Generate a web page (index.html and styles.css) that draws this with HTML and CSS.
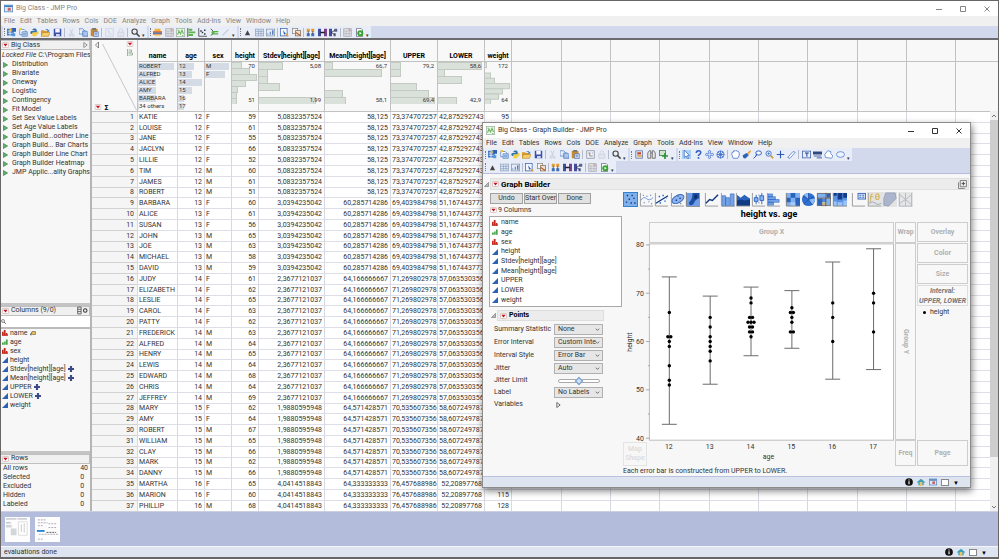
FILE: index.html
```html
<!DOCTYPE html>
<html lang="en">
<head>
<meta charset="utf-8">
<title>Big Class - JMP Pro</title>
<link rel="stylesheet" href="styles.css">
</head>
<body>
<svg class="sprite" aria-hidden="true">
  <symbol id="i-newtable" viewBox="0 0 12 12"><rect x="0" y="1" width="9" height="9" fill="#3f78c4"/><path d="M1 4h7M1 7h7M4 3v7" stroke="#fff"/><rect x="6" y="0" width="6" height="5" fill="#2b5fb8"/><path d="M5 0l1 2 2 .5-2 .8-1 2-1-2-2-.8 2-.5z" fill="#f4c430"/><rect x="7" y="7" width="4" height="4" fill="#4f9be0"/></symbol>
  <symbol id="i-script" viewBox="0 0 12 12"><path d="M1 2h6l2 2v5H1z" fill="#fff" stroke="#4a7ec4"/><path d="M4 5h7v6H4z" fill="#dbe8f8" stroke="#4a7ec4"/><path d="M5 7h5M5 9h5" stroke="#4a7ec4"/><path d="M1 0l3 0 0 3-3 0z" fill="#f4c430"/></symbol>
  <symbol id="i-python" viewBox="0 0 12 12"><path d="M3 3c0-3 6-3 6 0v3H4.500c-1 0-1.500 1-1.500 2H2C0 8 0 4 2 4h4V3z" fill="#3572a8"/><path d="M9 9c0 3-6 3-6 0V7c0-1 1-1 2-1h3c1 0 1.500-1 1.500-2h.5c2 0 2 4 0 4.500H6V9z" fill="#f5cc3a"/></symbol>
  <symbol id="i-folder" viewBox="0 0 12 12"><path d="M0 3h4l1 1h5v7H0z" fill="#d99a2b"/><path d="M2 6h10l-2 5H0z" fill="#f6cf6a" stroke="#a8741a" stroke-width=".6"/><path d="M6 2q3-2 4 1l1-1v3H8l1-1q-1-2-3-1z" fill="#4a82c8"/></symbol>
  <symbol id="i-save" viewBox="0 0 12 12"><path d="M1 1h10v10H1z" fill="#3b4ea8"/><path d="M3 1h6v5H3z" fill="#f4f6ff"/><path d="M4 8h5v3H4z" fill="#cfd6f2"/></symbol>
  <symbol id="i-cut" viewBox="0 0 12 12"><path d="M4 1l3 7M8 1L5 8" stroke="#c3c8d6" fill="none"/><circle cx="4" cy="9.500" r="1.500" fill="none" stroke="#c3c8d6"/><circle cx="8" cy="9.500" r="1.500" fill="none" stroke="#c3c8d6"/></symbol>
  <symbol id="i-copy" viewBox="0 0 12 12"><path d="M0 1h5l2 2v5H0z" fill="#e6effb" stroke="#5c82c0"/><path d="M5 4h5l2 2v5H5z" fill="#a9c5ee" stroke="#446fb5"/></symbol>
  <symbol id="i-paste" viewBox="0 0 12 12"><rect x="1" y="1" width="9" height="10" rx="1" fill="#c98a2c"/><rect x="3" y="0" width="5" height="2.500" fill="#777"/><path d="M5 5h6v6.500H5z" fill="#dfe9fa" stroke="#4d73b5"/><path d="M6.500 7h3M6.500 9h3" stroke="#4d73b5"/></symbol>
  <symbol id="i-prefs" viewBox="0 0 12 12"><rect x="1" y="1" width="10" height="10" fill="#eef0f5" stroke="#8a8f9c"/><path d="M3 4h3M5 4v4M5 8h4M8 4h1" stroke="#777"/></symbol>
  <symbol id="i-prefsoff" viewBox="0 0 12 12"><rect x="1" y="1" width="10" height="10" fill="none" stroke="#ccd0dc"/><path d="M3 4h3M5 4v4M5 8h4" stroke="#ccd0dc"/></symbol>
  <symbol id="i-lock" viewBox="0 0 12 12"><path d="M4 6V4q0-3 2.500-3T9 4v2" fill="none" stroke="#ccd0dc"/><rect x="2.500" y="5.500" width="8" height="5.500" fill="#e2e4ec" stroke="#ccd0dc"/></symbol>
  <symbol id="i-search" viewBox="0 0 12 12"><circle cx="4.800" cy="4.800" r="3.500" fill="none" stroke="#444" stroke-width="1.500"/><path d="M7.500 7.500l4 4" stroke="#444" stroke-width="2"/></symbol>
  <symbol id="i-print" viewBox="0 0 12 12"><path d="M2 1h8v4H2z" fill="#f3b13c"/><path d="M0 4h12v5H0z" fill="#e07b39"/><path d="M0 6h12v2H0z" fill="#5a7ab8"/><path d="M2 9h8v2H2z" fill="#f5d27a"/></symbol>
  <symbol id="i-graysheet" viewBox="0 0 12 12"><rect x="1" y="1" width="10" height="10" fill="#e5e5e8" stroke="#a2a5ad"/><path d="M1 4h10M4 4v7M8 4v7M1 7.500h10" stroke="#b0b3bb"/><path d="M7 0l4 3-3 1z" fill="#c99"/></symbol>
  <symbol id="i-gb" viewBox="0 0 12 12"><rect x=".5" y=".5" width="11" height="11" fill="#eef7ea" stroke="#9ab5a0"/><path d="M2 9l2-5 2 4 2-5 2 5" fill="none" stroke="#6fb562" stroke-width="1.400"/><path d="M2 3h2M8 10h2" stroke="#6fb562"/></symbol>
  <symbol id="i-dist" viewBox="0 0 12 12"><path d="M1 0v12" stroke="#333"/><path d="M2 1h5v2.500H2zM2 4.500h9V7H2zM2 8h6v2.500H2z" fill="#5cb547"/></symbol>
  <symbol id="i-fit" viewBox="0 0 12 12"><path d="M1 0v11h11" stroke="#333" fill="none"/><path d="M3 3h2v2H3zM5 5h2v2H5zM8 7h2v2H8zM8 2h2v2H8z" fill="#334"/></symbol>
  <symbol id="i-model" viewBox="0 0 12 12"><path d="M1 1l3 3M1 10l4-3" stroke="#333"/><path d="M3 4h8v1.500H3zM3 7h8v1.500H3z" fill="#4cb33c"/><circle cx="4" cy="6" r="2" fill="#5cb547"/></symbol>
  <symbol id="i-line" viewBox="0 0 12 12"><path d="M2 10l8-8" stroke="#c8ccd8" stroke-width="1.500"/></symbol>
  <symbol id="i-up" viewBox="0 0 12 12"><path d="M6 3l3.500 6.500h-7z" fill="#444"/></symbol>
  <symbol id="i-sheet" viewBox="0 0 12 12"><rect x=".5" y="1.500" width="11" height="9" fill="#e2ebf7" stroke="#8fa3c0"/><path d="M1 4.500h10M1 7.500h10M4.500 2v8M8 2v8" stroke="#8fa3c0"/></symbol>
  <symbol id="i-chartsheet" viewBox="0 0 12 12"><rect x=".5" y="1.500" width="11" height="9" fill="#e6edf8" stroke="#8394b0"/><path d="M2 9h1V7H2zM5 9h1.500V5H5zM8 9h2V3H8z" fill="#5a7fb8"/></symbol>
  <symbol id="i-select" viewBox="0 0 12 12"><rect x=".5" y=".5" width="9" height="10" fill="#f4f7fd" stroke="#3a66b0"/><path d="M4 3l4 5H6v3z" fill="#2c5db5"/><path d="M8 8l3 3" stroke="#e5a020" stroke-width="2"/></symbol>
  <symbol id="i-copies" viewBox="0 0 12 12"><rect x=".5" y=".5" width="7" height="7" fill="#f4f4f4" stroke="#888"/><rect x="4.500" y="3.500" width="7" height="7" fill="#e9e3d8" stroke="#8a6a48"/><path d="M5 6l6 4" stroke="#b5622c" stroke-width="1.500"/></symbol>
  <symbol id="i-stack" viewBox="0 0 12 12"><path d="M1 1h4v4H1zM7 1h4v4H7z" fill="#e59a2c"/><path d="M1 7h4v4H1zM7 7h4v4H7z" fill="#3f6fb8"/><path d="M3 4v4M9 4v4" stroke="#444"/></symbol>
  <symbol id="i-join" viewBox="0 0 12 12"><path d="M0 1h4v10H0z" fill="#3f4f9e"/><path d="M8 1h4v10H8z" fill="#7a3f8e"/><path d="M3 6h6" stroke="#222" stroke-width="2"/></symbol>
  <symbol id="i-split" viewBox="0 0 12 12"><path d="M0 1h4v10H0z" fill="#3f4f9e"/><path d="M7 1h4v4H7zM6 7h3v4H6z" fill="#5a5f8e"/><path d="M3 6l5-3M3 6l5 3" stroke="#333"/></symbol>
  <symbol id="i-run" viewBox="0 0 12 12"><path d="M2 .5h6l2 2v9H2z" fill="#fff" stroke="#667"/><circle cx="7" cy="7" r="4" fill="#35a32f"/><path d="M6 5l3 2-3 2z" fill="#fff"/></symbol>
  <symbol id="i-journal" viewBox="0 0 12 12"><path d="M1 1h9v10H1z" fill="#dde4f2" stroke="#5c72a0"/><path d="M3 3h5v3H3z" fill="#c54b36"/><path d="M3 8h6" stroke="#e0a030" stroke-width="2"/></symbol>
  <symbol id="i-binoc" viewBox="0 0 12 12"><path d="M1 11V4l2-3h2v10zM7 11V1h2l2 3v7z" fill="#e7e7ea" stroke="#555"/><path d="M5 4h2" stroke="#555"/></symbol>
  <symbol id="i-addg" viewBox="0 0 12 12"><rect x=".5" y=".5" width="8" height="7" fill="#cfe6cc" stroke="#3c7a4a"/><path d="M8 4v8M4 8h8" stroke="#2f8f35" stroke-width="2.200"/></symbol>
  <symbol id="i-arrow" viewBox="0 0 12 12"><path d="M3 0v10l2.500-2 2 4 1.500-.8-2-3.700h3z" fill="#fff" stroke="#3a6bc0"/></symbol>
  <symbol id="i-help" viewBox="0 0 12 12"><path d="M3 4q0-3 3-3t3 2.500Q9 5 6 7v1" fill="none" stroke="#2f5fc0" stroke-width="2"/><circle cx="6" cy="10.500" r="1.300" fill="#2f5fc0"/></symbol>
  <symbol id="i-cross4" viewBox="0 0 12 12"><path d="M6 0l2 2.500H7V5h2.500V4L12 6 9.500 8V7H7v2.500h1L6 12 4 9.500h1V7H2.500v1L0 6l2.500-2v1H5V2.500H4z" fill="#dce8ff" stroke="#3566c4" stroke-width=".8"/></symbol>
  <symbol id="i-globe" viewBox="0 0 12 12"><circle cx="6" cy="6" r="4.800" fill="#dce8ff" stroke="#3566c4"/><path d="M6 1v10M1 6h10M2.500 2.500l7 7M9.500 2.500l-7 7" stroke="#3566c4"/></symbol>
  <symbol id="i-hand" viewBox="0 0 12 12"><path d="M3 11L1 6l.5-3L3 3l.5-2 2 .5 1-1 1.500 1 2 .5 1 2v3L9 11z" fill="#fff" stroke="#3f6fc4"/></symbol>
  <symbol id="i-brush" viewBox="0 0 12 12"><path d="M11 0L6 5l2 2 4-5z" fill="#e6a83a"/><path d="M6 4L1 7q0 5 4 4l4-4z" fill="#2a62c0"/></symbol>
  <symbol id="i-lasso" viewBox="0 0 12 12"><ellipse cx="7.500" cy="4" rx="3.800" ry="2.800" fill="#fff" stroke="#2f5fc0" stroke-width="1.300"/><path d="M5 5q-1 4-4 6l4-4" fill="none" stroke="#2f5fc0" stroke-width="1.300"/></symbol>
  <symbol id="i-zoom" viewBox="0 0 12 12"><circle cx="4.800" cy="4.800" r="3.500" fill="#e9f1ff" stroke="#3f6fc4" stroke-width="1.200"/><path d="M3 4.800h3.600M4.800 3v3.600" stroke="#3f6fc4"/><path d="M7.500 7.500l3.500 3.500" stroke="#d2932c" stroke-width="2"/></symbol>
  <symbol id="i-plus" viewBox="0 0 12 12"><path d="M6 1v10M1 6h10" stroke="#2a58b8" stroke-width="1.500"/></symbol>
  <symbol id="i-pencil" viewBox="0 0 12 12"><path d="M1 10l7-8 3 1-7 8z" fill="#fff" stroke="#4a78c8"/></symbol>
  <symbol id="i-text" viewBox="0 0 12 12"><rect x=".5" y="1.500" width="11" height="9" fill="#e6eefc" stroke="#3a5ca8"/><path d="M4 4h5M6.500 4v5" stroke="#223a80" stroke-width="1.300"/></symbol>
  <symbol id="i-lines" viewBox="0 0 12 12"><path d="M0 2h12v4H0z" fill="#31487e"/><path d="M1 8h10M5 10.500h7" stroke="#4a62a0" stroke-width="1.300"/></symbol>
  <symbol id="i-poly" viewBox="0 0 12 12"><path d="M2 10L1 6l4-5 4 1v3l3 3-2 3z" fill="#fff" stroke="#4a78c8"/></symbol>
  <symbol id="i-oval" viewBox="0 0 12 12"><ellipse cx="6" cy="6" rx="5.300" ry="3.800" fill="#eef4ff" stroke="#4a78c8"/></symbol>

  <symbol id="g-points" viewBox="0 0 16 16"><rect width="16" height="16" fill="#7fb0ea"/><rect x=".5" y=".5" width="15" height="15" fill="none" stroke="#2f7fd0"/><path d="M4 3h1.500v1.500H4zM9 3h1.500v1.500H9zM6 7h1.500v1.500H6zM11 6h1.500v1.500H11zM3 10h1.500v1.500H3zM8 11h1.500v1.500H8zM12 11h1.500v1.500H12z" fill="#123a86"/></symbol>
  <symbol id="g-smooth" viewBox="0 0 16 16"><path d="M1.500 1v14H15" fill="none" stroke="#999"/><path d="M2 9q3-5 6-2t7-1" fill="none" stroke="#6b97d8"/><path d="M4 3h1v1H4zM8 4h1v1H8zM12 3h1v1h-1zM5 11h1v1H5zM10 10h1v1h-1zM13 12h1v1h-1z" fill="#2456a8"/></symbol>
  <symbol id="g-fit" viewBox="0 0 16 16"><path d="M1.500 1v14H15" fill="none" stroke="#999"/><path d="M2 12L15 4" stroke="#123a86" stroke-width="1.300"/><path d="M5 4h1.500v1.500H5zM9 3h1.500v1.500H9zM11 9h1.500v1.500H11zM6 11h1.500v1.500H6zM13 6h1v1h-1z" fill="#2f66c0"/></symbol>
  <symbol id="g-ellipse" viewBox="0 0 16 16"><path d="M1.500 1v14H15" fill="none" stroke="#999"/><ellipse cx="8.500" cy="7.500" rx="7" ry="4" transform="rotate(-30 8.500 7.500)" fill="#8db3ee" stroke="#3a68bc"/><path d="M6 8h1.500v1.500H6zM10 6h1.500v1.500H10zM8 4h1v1H8zM11 12h1v1h-1z" fill="#123a86"/></symbol>
  <symbol id="g-contour" viewBox="0 0 16 16"><rect x="1" y="1" width="15" height="14" fill="#6f9ce4"/><path d="M8 1h7v6q-4 1-5 4-1 3-4 3-3-1-1-4 3-2 3-9z" fill="#1c4fa4"/><path d="M10 3h3v3l-3 2z" fill="#0b2b6b"/><path d="M1.500 0v15.500H16" fill="none" stroke="#888"/></symbol>
  <symbol id="g-line" viewBox="0 0 16 16"><path d="M1.500 1v14H15" fill="none" stroke="#999"/><path d="M2 12l4-4 3 1 6-6" fill="none" stroke="#123a86" stroke-width="1.600"/></symbol>
  <symbol id="g-bar" viewBox="0 0 16 16"><path d="M2 4h4v11H2zM6 6h4v9H6zM11 2h4v13h-4z" fill="#74a3e8" stroke="#3a6cc0" stroke-width=".7"/><path d="M1.500 1v14H16" fill="none" stroke="#999"/></symbol>
  <symbol id="g-area" viewBox="0 0 16 16"><path d="M2 3l4 3 4-3 3 2 3 2v8H2z" fill="#2a62bc"/><path d="M2 9l4-1 4 1 6-1v7H2z" fill="#0f3a84"/><path d="M1.500 1v14H16" fill="none" stroke="#999"/></symbol>
  <symbol id="g-box" viewBox="0 0 16 16"><path d="M1.500 1v14H15" fill="none" stroke="#999"/><path d="M5.500 3v10M11.500 1v12" stroke="#2f66c0"/><path d="M3.500 6h4v4h-4zM9.500 4h4v5h-4z" fill="#8db3ee" stroke="#2f66c0"/><path d="M8 11h1v1H8zM8 3h1v1H8z" fill="#2f66c0"/></symbol>
  <symbol id="g-hist" viewBox="0 0 16 16"><path d="M2 2h5v3H2zM2 5h8v3H2zM2 8h12v3H2zM2 11h6v3H2z" fill="#74a3e8" stroke="#2f66c0" stroke-width=".6"/><path d="M1.500 1v14H15" fill="none" stroke="#999"/></symbol>
  <symbol id="g-heat" viewBox="0 0 16 16"><rect x="1" y="1" width="15" height="14" fill="#7fb0f0"/><path d="M6 1h5v5H6zM1 6h5v5H1zM11 6h5v9h-5z" fill="#2a62bc"/><path d="M6 11h5v4H6z" fill="#a9caf6"/><path d="M1.500 1v14H16" fill="none" stroke="#888"/></symbol>
  <symbol id="g-pie" viewBox="0 0 16 16"><circle cx="8" cy="8" r="7" fill="#2f6fd0"/><path d="M8 8L3 3q2-2 5-2zM8 8l7-1q0 4-3 6z" fill="#8db9f4"/><path d="M8 8L8 1M8 8l6-3M8 8l4 6M8 8l-5 5M8 8L2 4" stroke="#1a4a98" stroke-width=".7"/></symbol>
  <symbol id="g-tree" viewBox="0 0 16 16"><path d="M1 1h9v5H1zM11 7h4v7h-4z" fill="#7fb0f0"/><path d="M11 1h4v5h-4zM1 7h5v8H1z" fill="#2a62bc"/><path d="M6 7h5v4H6z" fill="#4f88dc"/><path d="M6 11h5v4H6z" fill="#c8b48a"/><rect x="1.500" y="1.500" width="14" height="13" fill="none" stroke="#777"/><path d="M1 6.500h15M10.500 1v14M6 7v8" stroke="#555"/></symbol>
  <symbol id="g-mosaic" viewBox="0 0 16 16"><path d="M1 1h15v14H1z" fill="#5a93e4"/><path d="M1 1h4v3H1zM6 1h5v7H6zM12 1h4v5h-4z" fill="#123a86"/><path d="M1 10h4v5H1zM6 11h5v4H6zM12 9h4v6h-4z" fill="#9cc2f5"/><path d="M1.500 1v14H16" fill="none" stroke="#888"/></symbol>
  <symbol id="g-caption" viewBox="0 0 16 16"><path d="M1.500 1v14H15" fill="none" stroke="#999"/><rect x="7.500" y="1.500" width="8" height="6" fill="#dbe7fb" stroke="#3a68bc"/><path d="M9 3h2v1H9zM12 3h2v1h-2zM9 5h2v1H9zM12 5h2v1h-2z" fill="#3a68bc"/></symbol>
  <symbol id="g-formula" viewBox="0 0 16 16"><path d="M0 0h16v16H0z" fill="#e3e3e3"/><path d="M1.500 1v14H15" fill="none" stroke="#aaa"/><path d="M6 2q-2 0-2 4t-1 4M3 5h4" fill="none" stroke="#d8b75a" stroke-width="1.200"/><ellipse cx="11" cy="5" rx="2" ry="3" fill="none" stroke="#d8b75a" stroke-width="1.200"/><path d="M9 5h4" stroke="#d8b75a"/><path d="M2 12q4-3 7 0t6 0" fill="none" stroke="#9ab"/></symbol>
  <symbol id="g-map" viewBox="0 0 16 16"><path d="M0 0h16v16H0z" fill="#e3e3e3"/><path d="M4 1h10l1 6-4 4-4 4-5-1V7z" fill="#abb6cc" stroke="#98a3ba"/></symbol>
  <symbol id="g-parallel" viewBox="0 0 16 16"><path d="M0 0h16v16H0z" fill="#e6e6e6"/><path d="M1.500 1v14H15M8 1v14M14.500 1v14M2 3l6 5 6-5M2 12l6-4 6 5" fill="none" stroke="#b2b8c2"/></symbol>

  <symbol id="c-nom" viewBox="0 0 10 10"><path d="M0 3h2.500v6H0zM3 0h3v9H3zM6.500 5H9v4H6.500z" fill="#c4281c"/><path d="M0 8.500h10" stroke="#c4281c" stroke-width="2"/></symbol>
  <symbol id="c-ord" viewBox="0 0 10 10"><path d="M0 6h3v3.500H0zM3.500 4H6v5.500H3.500zM6.500 1H9.500v8.500h-3z" fill="#4aa64c"/></symbol>
  <symbol id="c-cont" viewBox="0 0 10 10"><path d="M0 10L10 0v10z" fill="#2b62b4"/></symbol>
  <symbol id="c-formula" viewBox="0 0 10 10"><path d="M3.200 0h3.600v3.200H10v3.600H6.800V10H3.200V6.800H0V3.200h3.200z" fill="#3d4a86"/></symbol>
  <symbol id="c-tag" viewBox="0 0 12 10"><path d="M1 9l3-7h7v6H5z" fill="#f0c050" stroke="#444"/><path d="M0 9l4-5" stroke="#333"/></symbol>
  <symbol id="s-info" viewBox="0 0 12 12"><circle cx="6" cy="6" r="5.800" fill="#111"/><path d="M6 5v4.500M6 2.300v1.500" stroke="#fff" stroke-width="1.700"/></symbol>
  <symbol id="s-home" viewBox="0 0 12 12"><path d="M0 6l6-5 6 5-1 1.500-1-1V11H2V6.500l-1 1z" fill="#38a0b8"/><path d="M4 6h4v6H4z" fill="#eec26b"/></symbol>
  <symbol id="s-win" viewBox="0 0 12 12"><rect x=".5" y="1.500" width="11" height="9" fill="#dce8f8" stroke="#4a82c0"/><path d="M1 3h10" stroke="#3f78b8" stroke-width="2"/><path d="M5 5h4v4H5z" fill="#c66"/></symbol>
  <symbol id="w-min" viewBox="0 0 10 10"><path d="M2 5.500h6" stroke="currentColor"/></symbol>
  <symbol id="w-max" viewBox="0 0 10 10"><path d="M2.500 2.500h5v5h-5z" fill="none" stroke="currentColor"/></symbol>
  <symbol id="w-close" viewBox="0 0 10 10"><path d="M2.500 2.500l5 5M7.500 2.500l-5 5" stroke="currentColor"/></symbol>
  <symbol id="i-redtri" viewBox="0 0 8 7"><rect x=".5" y=".5" width="7" height="6" rx="1" fill="#fdf6f6" stroke="#d6bcbc"/><path d="M1.500 2h5L4 5.300z" fill="#c40f1e"/></symbol>
  <symbol id="i-tree" viewBox="0 0 6 7"><path d="M.5 .5L5.500 3.500.5 6.500z" fill="#5fb16b" stroke="#2f7f45" stroke-width=".8"/></symbol>
  <symbol id="i-open" viewBox="0 0 6 6"><path d="M5.500 .5v5H.5z" fill="#bbb" stroke="#666" stroke-width=".7"/></symbol>
</svg>

<div class="app">
  <header class="titlebar">
    <svg class="appicon"><use href="#s-win"/></svg>
    <span class="title">Big Class - JMP Pro</span>
    <div class="winbtns">
      <button aria-label="Minimize"><svg><use href="#w-min"/></svg></button>
      <button aria-label="Maximize"><svg><use href="#w-max"/></svg></button>
      <button aria-label="Close"><svg><use href="#w-close"/></svg></button>
    </div>
  </header>
  <nav class="menubar dim"></nav>
  <div class="toolbar" id="main-tools"></div>

  <main class="main">
    <aside class="side">
      <section class="panel panel-top">
        <h2 class="panel-head"><svg class="red"><use href="#i-redtri"/></svg>Big Class<svg class="edge" viewBox="0 0 6 8"><path d="M1 1l4 3-4 3z" fill="none" stroke="#666" stroke-width=".8"/></svg></h2>
        <p class="locked"><i>Locked File</i><span>C:\Program Files\</span></p>
        <ul class="scripts">
          <li>Distribution</li><li>Bivariate</li><li>Oneway</li><li>Logistic</li><li>Contingency</li><li>Fit Model</li><li>Set Sex Value Labels</li><li>Set Age Value Labels</li><li>Graph Build...oother Line</li><li>Graph Build... Bar Charts</li><li>Graph Builder Line Chart</li><li>Graph Builder Heatmap</li><li>JMP Applic...ality Graphs</li>
        </ul>
      </section>
      <section class="panel panel-cols">
        <h2 class="panel-head"><svg class="red"><use href="#i-redtri"/></svg>Columns (9/0)<svg class="colopt" viewBox="0 0 16 12"><path d="M1 1h5v10H1zM1 4.300h5M1 7.600h5" fill="none" stroke="#333"/><circle cx="12" cy="6" r="2.500" fill="none" stroke="#333" stroke-width="1.500"/></svg></h2>
        <div class="filter"><svg><use href="#i-search"/></svg><input type="text" aria-label="Filter columns"></div>
        <ul class="cols" id="side-cols"></ul>
      </section>
      <section class="panel panel-rows">
        <h2 class="panel-head"><svg class="red"><use href="#i-redtri"/></svg>Rows</h2>
        <dl class="counts">
          <dt>All rows</dt><dd>40</dd><dt>Selected</dt><dd>0</dd><dt>Excluded</dt><dd>0</dd><dt>Hidden</dt><dd>0</dd><dt>Labeled</dt><dd>0</dd>
        </dl>
      </section>
    </aside>

    <section class="sheet">
      <table class="data" aria-label="Big Class">
        <colgroup id="cols"></colgroup>
        <thead id="head"></thead>
        <tbody id="rows"></tbody>
      </table>
      <div class="scroll"><svg viewBox="0 0 8 9"><path d="M2 6l2-2 2 2" fill="none" stroke="#777"/></svg><span class="thumb"></span><svg viewBox="0 0 8 9"><path d="M2 4l2 2 2-2" fill="none" stroke="#777"/></svg></div>
    </section>
  </main>

  <div class="thumbs">
    <svg viewBox="0 0 26 26"><rect width="26" height="26" fill="#fdfdfd"/><path d="M1 2h11M1 6h5M13 2h10" stroke="#aab"/><path d="M1 8h6v3H1zM6 12h6v7H6z" fill="#d3d6da"/><path d="M14 5h9v14h-9z" fill="#fff" stroke="#ddd"/><path d="M17 8v8M20 7v9" stroke="#999" stroke-dasharray="1 1"/></svg>
    <svg viewBox="0 0 26 26"><rect width="26" height="26" fill="#fdfdfd"/><path d="M3 3h8M3 6h10M14 7h9M3 9h6M14 11h9M4 18h20M3 23h6" stroke="#aab" stroke-dasharray="2 1"/><path d="M2 14.500h8" stroke="#2a8ad4" stroke-width="2"/><path d="M12 16h10" stroke="#555" stroke-dasharray="2 1"/></svg>
  </div>
  <footer class="status"><span>evaluations done</span><div class="status-icons"><svg><use href="#s-info"/></svg><svg><use href="#s-home"/></svg><input type="checkbox" aria-label="Select window"><span class="caret">▼</span></div></footer>

  <section class="win" aria-label="Graph Builder">
    <header class="titlebar">
      <svg class="appicon"><use href="#i-gb"/></svg>
      <span class="title">Big Class - Graph Builder - JMP Pro</span>
      <div class="winbtns">
        <button aria-label="Minimize"><svg><use href="#w-min"/></svg></button>
        <button aria-label="Maximize"><svg><use href="#w-max"/></svg></button>
        <button aria-label="Close"><svg><use href="#w-close"/></svg></button>
      </div>
    </header>
    <nav class="menubar"></nav>
    <div class="toolbar" id="gb-tools"></div>
    <div class="toolbar last" id="gb-tools2"></div>
    <div class="body">
      <div class="outline"><svg class="open"><use href="#i-open"/></svg><h1><svg class="red"><use href="#i-redtri"/></svg>Graph Builder<svg class="pin" viewBox="0 0 10 10"><path d="M2.500 .5h7v7h-7zM.5 2.500v7h7" fill="none" stroke="#777"/><path d="M6 2v4M4 4h4" stroke="#444"/></svg></h1></div>
      <div class="gb">
        <div class="controls">
          <div class="actions"><button>Undo</button><button>Start Over</button><button>Done</button></div>
          <div class="ncols"><svg class="red"><use href="#i-redtri"/></svg>9 Columns</div>
          <ul class="cols boxed" id="gb-cols"></ul>
          <div class="points"><svg class="open"><use href="#i-open"/></svg><h2><svg class="red"><use href="#i-redtri"/></svg>Points</h2></div>
          <form class="opts">
            <label for="ss">Summary Statistic</label><select id="ss"><option>None</option></select>
            <label for="ei">Error Interval</label><select id="ei"><option>Custom Inte</option></select>
            <label for="is">Interval Style</label><select id="is"><option>Error Bar</option></select>
            <label for="ji">Jitter</label><select id="ji"><option>Auto</option></select>
            <label for="jl">Jitter Limit</label><input id="jl" type="range">
            <label for="la">Label</label><select id="la"><option>No Labels</option></select>
            <span>Variables</span><svg class="var" viewBox="0 0 6 7"><path d="M1 .5l4 3-4 3z" fill="none" stroke="#555"/></svg>
          </form>
        </div>
        <div class="graph">
          <div class="elements" id="elements"></div>
          <h3>height vs. age</h3>
          <div class="zones">
            <div class="zone gx">Group X</div>
            <div class="zone wrap">Wrap</div>
            <svg class="plot" id="plot" viewBox="0 0 273 223"></svg>
            <div class="zone map">Map<br>Shape</div>
            <div class="zone gy"><span>Group Y</span></div>
            <div class="zone freq">Freq</div>
            <div class="legend">
              <div class="zone">Overlay</div>
              <div class="zone">Color</div>
              <div class="zone">Size</div>
              <div class="zone interval">Interval:<br>UPPER, LOWER</div>
              <div class="key"><i></i>height</div>
            </div>
            <div class="zone page">Page</div>
          </div>
          <p class="note">Each error bar is constructed from UPPER to LOWER.</p>
        </div>
      </div>
    </div>
    <footer class="status"><div class="status-icons"><svg><use href="#s-info"/></svg><svg><use href="#s-home"/></svg><svg><use href="#s-win"/></svg><input type="checkbox" aria-label="Select window"><span class="caret">▼</span></div></footer>
  </section>
</div>
<script src="app.js"></script>
</body>
</html>
```
FILE: styles.css
```css
* { box-sizing: border-box; }
body, h1, h2, h3, p, ul, dl, dd { margin: 0; padding: 0; }
ul { list-style: none; }
html, body { height: 100%; }
body {
  font-family: Roboto, "Open Sans", sans-serif;
  font-size: 7px;
  line-height: 9px;
  color: #333;
  background: #6b6666;
}
button, input, select { font: inherit; color: inherit; margin: 0; padding: 0; }
button { border: 0; background: none; }
svg { display: block; flex: none; }
.sprite { position: absolute; width: 0; height: 0; }
.red { width: 7px; height: 6px; }

.app {
  position: relative;
  display: flex;
  flex-direction: column;
  height: 100vh;
  padding: 1px 1px 2px;
}
.titlebar {
  display: flex;
  align-items: center;
  height: 15px;
  padding-left: 3px;
  gap: 3px;
  background: #fff;
}
.appicon { width: 9px; height: 9px; }
.app > .titlebar, .dim { color: #858585; }
.winbtns { display: flex; margin-left: auto; gap: 14px; padding-right: 6px; }
.winbtns button, .winbtns svg { width: 10px; height: 10px; }
.menubar {
  display: flex;
  gap: 5px;
  height: 10px;
  padding-left: 3px;
  background: #f0f0f0;
}
.menubar button { line-height: 9px; white-space: nowrap; }
.toolbar { display: flex; gap: 2px; height: 12px; padding-left: 2px; background: #d3d9ec; }
.tools {
  display: flex;
  justify-content: space-between;
  align-items: center;
  background: #e8edf8;
  padding: 0 1px;
}
.tools button, .tools svg { width: 9px; height: 9px; }
.tools .on { background: #a9d0f5; }
.tools .grip { width: 1px; height: 8px; border-left: 1px dotted #777; }
.tools .sep { width: 1px; height: 9px; background: #b4bbcd; }
.tools .more { width: 4px; align-self: flex-end; font-size: 5px; line-height: 6px; }
.tools.file { width: 144px; }
.tools.analyze { width: 88px; }
.tools.tables { width: 132px; }
.tools.report { width: 46px; }
.tools.cursor { width: 174px; }
#main-tools { height: 14px; border-bottom: 2px solid #6b6c70; }

.main { display: flex; flex: 1; min-height: 0; background: #f7f7f7; }
.side { display: flex; flex-direction: column; width: 91px; border-right: 2px solid #b5b5b5; }
.panel { overflow: hidden; border-bottom: 3px solid #c4c4c4; }
.panel-top { flex: 266; }
.panel-cols { flex: 147; }
.panel-rows { flex: 58; border-bottom: 0; }
.panel-head {
  display: flex;
  align-items: center;
  gap: 2px;
  height: 10px;
  padding: 0 1px;
  font-size: 7px;
  font-weight: 400;
  background: #f0f0f0;
  border: 1px solid #c0c0c0;
  border-left: 0;
}
.edge, .colopt { margin-left: auto; }
.edge { width: 5px; height: 8px; }
.colopt { width: 11px; height: 9px; }
.locked { display: flex; gap: 2px; padding: 1px 0 0 1px; white-space: nowrap; }
.scripts { display: grid; grid-auto-rows: 1fr; height: 114px; }
.scripts li { display: flex; align-items: center; gap: 4px; padding-left: 2px; white-space: nowrap; }
.scripts svg { width: 5px; height: 6px; }
.filter { display: flex; align-items: center; height: 13px; background: #fff; border-bottom: 2px solid #bbb; }
.filter svg { width: 5px; height: 5px; }
.filter input { width: 80px; height: 9px; border: 0; outline: 0; background: none; }
.cols { display: grid; grid-auto-rows: 1fr; height: 79px; }
.cols li { display: flex; align-items: center; gap: 2px; padding-left: 1px; white-space: nowrap; }
.cols svg { width: 6px; height: 6px; }
.counts { display: grid; grid-template-columns: 1fr auto; padding: 0 2px; }

.sheet { position: relative; flex: 1; min-width: 0; overflow: hidden; }
.data { width: 100%; height: 100%; table-layout: fixed; border-collapse: separate; border-spacing: 0; }
.c45 { width: 45px; }
.c40 { width: 40px; }
.c27 { width: 27px; }
.c66 { width: 66px; }
.c47 { width: 47px; }
.c49 { width: 49px; }
.c50 { width: 50px; }
.data th, .data td { padding: 0; border-left: 1px solid #d8d8e2; border-bottom: 1px solid #dedee8; overflow: hidden; white-space: nowrap; }
.data thead th, .data thead td { border-color: #c2c2c2; background: #f8f8f8; }
.data thead .names th, .data thead .names td { height: 22px; vertical-align: bottom; font-weight: 700; color: #000; }
.data thead .hist td { height: 49px; vertical-align: top; }
.data tbody td { line-height: 8px; padding: 0 2px 0 1px; background: #fff; text-align: right; }
.data tbody th { line-height: 8px; padding-right: 3px; background: #f5f5f5; text-align: right; font-weight: 400; border-left: 0; border-color: #d2d2d2; }
.data tbody .txt { text-align: left; }
.data thead .corner { border-left: 0; font-weight: 400; }
.corner svg { width: 100%; height: 71px; }
.freqs { font-size: 6px; line-height: 8px; }
.freqs div { white-space: nowrap; height: 8px; padding-left: 1px; background: linear-gradient(#d5dbe5, #d5dbe5) no-repeat 0 1px / 100% 7px; }
.histo { position: relative; height: 42px; font-size: 6px; line-height: 8px; }
.histo svg { width: 100%; height: 42px; }
.histo span { position: absolute; right: 3px; top: 0; }
.histo span + span { top: auto; bottom: 0; }
.scroll {
  position: absolute;
  right: 0;
  top: 71px;
  bottom: 0;
  width: 8px;
  display: flex;
  flex-direction: column;
  background: #f0f0f0;
}
.scroll .thumb { flex: 1; margin-bottom: 45px; background: #cdcdcd; }
.scroll svg { width: 8px; height: 9px; }

.thumbs { display: flex; align-items: center; gap: 5px; height: 35px; padding-left: 4px; background: #b3bcdb; border-top: 1px solid #ccd0de; }
.thumbs svg { width: 25px; height: 25px; }
.status { display: flex; align-items: center; height: 11px; padding: 0 3px; background: #dfe5f0; border-top: 1px solid #f4f6fa; }
.status-icons { display: flex; align-items: center; gap: 4px; margin-left: auto; padding-right: 8px; }
.status-icons svg { width: 8px; height: 8px; }
.status-icons input { appearance: none; width: 8px; height: 7px; margin: 0; background: #fff; border: 1px solid #888; }
.caret { font-size: 6px; line-height: 7px; color: #000; }

.win {
  position: absolute;
  left: 482px;
  top: 122px;
  right: 28px;
  bottom: 71px;
  display: flex;
  flex-direction: column;
  background: #f7f7f7;
  border: 1px solid #8c8c8c;
  box-shadow: 1px 3px 7px rgba(0, 0, 0, .5);
}
.win .titlebar { height: 15px; }
.win .toolbar { height: 13px; padding-left: 1px; }
.win .toolbar.last { border-bottom: 1px solid #b5bddc; }
.win .status { border-top-color: #b9c1de; }
.body { flex: 1; display: flex; flex-direction: column; padding-top: 4px; min-height: 0; }
.outline, .points { display: flex; align-items: center; gap: 1px; padding-left: 1px; }
.open { width: 5px; height: 5px; }
.outline h1 {
  display: flex;
  flex: 1;
  align-items: center;
  gap: 2px;
  height: 12px;
  padding: 0 1px;
  margin-right: 1px;
  font-size: 8px;
  color: #000;
  background: #ececec;
  border: 1px solid #e0e0e0;
}
.pin { width: 9px; height: 9px; margin-left: auto; }
.gb { display: flex; flex: 1; min-height: 0; padding-top: 2px; }
.controls { width: 139px; padding: 0 0 0 6px; }
.actions { display: flex; gap: 1px; padding: 1px 0 0 1px; }
.actions button { flex: none; width: 33px; height: 11px; line-height: 9px; white-space: nowrap; background: #e1e1e1; border: 1px solid #a0a0a0; }
.ncols { display: flex; align-items: center; gap: 1px; height: 12px; padding-left: 1px; }
.boxed { height: 91px; padding: 1px; background: #fff; border: 1px solid #a8a8a8; }
.boxed li { gap: 3px; }
.points { padding: 3px 18px 0 2px; }
.points h2 { display: flex; flex: 1; align-items: center; gap: 2px; height: 11px; padding-left: 2px; font-size: 7px; color: #000; background: #ececec; border: 1px solid #ddd; }
.opts { display: grid; grid-template-columns: 60px 49px; row-gap: 2px; align-items: center; padding: 3px 0 0 5px; }
.opts select { appearance: none; height: 11px; padding-left: 3px; line-height: 9px; background: #e6e6e6 url("data:image/svg+xml,%3Csvg xmlns='http://www.w3.org/2000/svg' viewBox='0 0 6 6'%3E%3Cpath d='M1 2l2 2 2-2' fill='none' stroke='%23555'/%3E%3C/svg%3E") no-repeat right 2px center / 5px 5px; border: 1px solid #b0b0b0; border-radius: 0; }
.opts input { appearance: none; width: 42px; height: 9px; margin-left: 4px; background: none; }
.opts input::-webkit-slider-runnable-track { height: 4px; background: #fff; border: 1px solid #aaa; border-radius: 2px; }
.opts input::-webkit-slider-thumb { appearance: none; width: 6px; height: 6px; margin-top: -2px; background: #cfe0f5; border: 1px solid #6d95c4; transform: rotate(45deg); }
.var { width: 5px; height: 6px; margin-left: 2px; }

.graph { flex: 1; display: flex; flex-direction: column; min-width: 0; padding-right: 2px; }
.elements { display: flex; gap: 4px; padding-left: 1px; }
.elements div { display: flex; justify-content: space-between; width: 77px; }
.elements div.four { width: 62px; }
.elements button, .elements svg { width: 15px; height: 15px; }
.graph h3 { height: 15px; padding-right: 52px; font-size: 9px; line-height: 15px; text-align: center; color: #000; }
.zones { flex: 1; min-height: 0; display: grid; grid-template-columns: 26px 1fr 21px 51px; grid-template-rows: 21px 1fr 26px; column-gap: 1px; }
.zone { display: flex; align-items: center; justify-content: center; text-align: center; font-weight: 700; color: #b0b0b0; background: #f8f8f8; border: 1px solid #cdcdcd; }
.gx { grid-area: 1 / 2; }
.wrap { grid-area: 1 / 3; }
.plot { grid-area: 2 / 1 / 4 / 3; width: 100%; height: 100%; min-height: 0; overflow: visible; }
.map { grid-area: 3 / 1; color: #dedede; background: none; border-color: #e4e4e4; margin: 2px 1px 0 1px; }
.gy { grid-area: 2 / 3; }
.gy span { writing-mode: vertical-rl; }
.freq { grid-area: 3 / 3; }
.page { grid-area: 3 / 4; }
.legend { grid-area: 1 / 4 / 3 / 5; display: flex; flex-direction: column; gap: 1px; min-height: 0; }
.legend .zone { height: 20px; }
.legend .zone.interval { height: 21px; font-style: italic; line-height: 10px; color: #777; white-space: nowrap; border-color: #ddd; }
.key { display: flex; align-items: center; gap: 4px; padding-left: 6px; height: 11px; }
.key i { width: 3px; height: 3px; border-radius: 50%; background: #000; }
.note { height: 10px; padding-left: 1px; line-height: 10px; white-space: nowrap; }
.plot text { font-size: 7px; fill: #333; }
.plot .err { stroke: #6a6a6a; }
.plot .axis { stroke: #aaa; fill: none; }
.plot .area { fill: #fff; stroke: #bdbdbd; }
```
FILE: app.js
```javascript
const $ = id => document.getElementById(id);

// Menus
const MENUS = ["File", "Edit", "Tables", "Rows", "Cols", "DOE", "Analyze", "Graph", "Tools", "Add-Ins", "View", "Window", "Help"];
document.querySelectorAll(".menubar").forEach(bar => {
  bar.innerHTML = MENUS.map(m => `<button>${m}</button>`).join("");
});

// Toolbars: "|" is a separator
function tools(name, icons, on) {
  const items = icons.split(" ").map(i => i === "|" ? '<span class="sep"></span>'
    : `<button aria-label="${i}"${i === on ? ' class="on"' : ""}><svg><use href="#i-${i}"/></svg></button>`).join("");
  return `<div class="tools ${name}"><span class="grip"></span>${items}<span class="more">▾</span></div>`;
}
const tableTools = tools("tables", "up sheet chartsheet | select copies | stack join split | graysheet run");
$("main-tools").innerHTML =
  tools("file", "newtable script python folder save | cut copy paste | prefsoff lock | search") +
  tools("analyze", "print graysheet gb dist fit model line") + tableTools;
$("gb-tools").innerHTML =
  tools("file", "newtable script python folder save | cut copy paste | prefs lock | search") +
  tools("report", "journal binoc addg") +
  tools("cursor", "arrow help cross4 globe | hand brush lasso zoom plus pencil | text lines poly oval", "arrow");
$("gb-tools2").innerHTML = tableTools;
$("elements").innerHTML = ["points smooth fit ellipse contour", "line bar area box hist", "heat pie tree mosaic", "caption formula map parallel"]
  .map(g => g.split(" ")).map(g => `<div class="${g.length === 4 ? "four" : "five"}">` +
    g.map(i => `<button aria-label="${i}"><svg><use href="#g-${i}"/></svg></button>`).join("") + "</div>").join("");

// Column lists
document.querySelectorAll(".scripts li").forEach(li => {
  li.insertAdjacentHTML("afterbegin", '<svg><use href="#i-tree"/></svg>');
});
const COLS = [["name", "nom", "tag"], ["age", "ord"], ["sex", "nom"], ["height", "cont"], ["Stdev[height][age]", "cont", "formula"],
  ["Mean[height][age]", "cont", "formula"], ["UPPER", "cont", "formula"], ["LOWER", "cont", "formula"], ["weight", "cont"]];
const colList = marks => COLS.map(([n, t, m]) => `<li><svg><use href="#c-${t}"/></svg>${n}${marks && m ? `<svg><use href="#c-${m}"/></svg>` : ""}</li>`).join("");
$("side-cols").innerHTML = colList(true);
$("gb-cols").innerHTML = colList(false);

// Data table
const EMPTY = 10;
const widths = [45, 40, 27, 27, 27, 66, 66, 47, 47, 27, 50, 49, 49, 50, 49, 49, 50, 49, 49];
$("cols").innerHTML = widths.map(w => `<col class="c${w}">`).join("") + "<col>";
const blanks = "<td></td>".repeat(EMPTY);
const freqs = list => `<td class="freqs">${list.map(([t, w]) => `<div style="width:${w}px">${t}</div>`).join("")}</td>`;
const histo = (bars, hi, lo) => {
  const h = 42 / bars.length;
  return `<td><div class="histo"><svg>${bars.map((w, i) => w ? `<rect x="-.5" y="${i * h + .5}" width="${w}" height="${h}" fill="#dae0da" stroke="#c2cac2"/>` : "").join("")}</svg><span>${hi}</span><span>${lo}</span></div></td>`;
};
$("head").innerHTML = `<tr class="names"><td class="corner" rowspan="2"><svg viewBox="0 0 44 71"><path d="M10 4L44 70" stroke="#bbb" stroke-width=".8"/><path d="M6 2L3 5l3 3z" fill="none" stroke="#666" stroke-width=".8"/><use href="#i-redtri" x="34" y="1" width="7" height="6"/><path d="M35 9v7M36 10h3v2h-3M36 13h4v2h-4" stroke="#7a9a7a" stroke-width=".7" fill="none"/><use href="#i-redtri" x="2" y="64" width="7" height="6"/><text x="12" y="70" font-size="7">Σ</text></svg></td>`
  + COLS.map(c => `<th scope="col">${c[0]}</th>`).join("") + blanks + "</tr><tr class='hist'>"
  + freqs([["ROBERT", 36], ["ALFRED", 18], ["ALICE", 18], ["AMY", 18], ["BARBARA", 18], ["34 others", 0]])
  + freqs([["12", 16], ["13", 14], ["14", 24], ["15", 14], ["16", 6], ["17", 6]])
  + freqs([["M", 24], ["F", 20]])
  + histo([10, 18, 25, 14, 6, 5, 5], "70", "51")
  + histo([24, 9, 9, 21, 0, 57], "5,08", "1,99")
  + histo([8, 57, 0, 0, 18, 21], "66,7", "58,1")
  + histo([10, 10, 0, 26, 38, 44], "79,2", "69,4")
  + histo([44, 7, 24, 0, 0, 19], "58,6", "42,9")
  + histo([2, 0, 6, 10, 25, 18, 14, 6], "172", "64")
  + blanks + "</tr>";

const STATS = {
  12: ["5,0832357524", "58,125", "73,374707257", "42,875292743"],
  13: ["3,0394235042", "60,285714286", "69,403984798", "51,167443773"],
  14: ["2,3677121037", "64,166666667", "71,269802978", "57,063530356"],
  15: ["1,9880595948", "64,571428571", "70,535607356", "58,607249787"],
  16: ["4,0414518843", "64,333333333", "76,457688986", "52,20897768"]
};
const PEOPLE = {
  12: "KATIE F 59,LOUISE F 61,JANE F 55,JACLYN F 66,LILLIE F 52,TIM M 60,JAMES M 61,ROBERT M 51",
  13: "BARBARA F 60,ALICE F 61,SUSAN F 56,JOHN M 65,JOE M 63,MICHAEL M 58,DAVID M 59",
  14: "JUDY F 61,ELIZABETH F 62,LESLIE F 65,CAROL F 63,PATTY F 62,FREDERICK M 63,ALFRED M 64,HENRY M 65,LEWIS M 64,EDWARD M 68,CHRIS M 64,JEFFREY M 69",
  15: "MARY F 62,AMY F 64,ROBERT M 67,WILLIAM M 65,CLAY M 66,MARK M 62,DANNY M 66",
  16: "MARTHA F 65,MARION F 60,PHILLIP M 68"
};
const WEIGHTS = { 1: 95, 36: 115, 37: 128 };
let n = 0;
$("rows").innerHTML = Object.entries(PEOPLE).map(([age, list]) => list.split(",").map(p => {
  const [name, sex, h] = p.split(" ");
  n++;
  return `<tr><th scope="row">${n}</th><td class="txt">${name}</td><td>${age}</td><td class="txt">${sex}</td><td>${h}</td>`
    + STATS[age].map(v => `<td>${v}</td>`).join("") + `<td>${WEIGHTS[n] || ""}</td>${blanks}</tr>`;
}).join("")).join("");

// Plot of height by age with error bars
const heights = age => PEOPLE[age].split(",").map(p => +p.split(" ")[2]);
const groups = [12, 13, 14, 15, 16].map(a => [a, heights(a), ...STATS[a].slice(2).map(s => parseFloat(s.replace(",", ".")))]);
groups.push([17, [70, 68, 62], 79.2, 54.2]);
const y = v => 1.5 + (80 - v) * 4.85;
const x = a => 47 + (a - 12) * 41;
let out = '<rect class="area" x="27.5" y=".5" width="245" height="197"/>';
for (let v = 40; v <= 80; v += 5) {
  out += `<path class="axis" d="M${v % 10 ? 26 : 24} ${y(v)}H28"/>`;
  if (v % 10 === 0) out += `<text x="22" y="${y(v) + 2.5}" text-anchor="end">${v}</text>`;
}
for (const [a, hs, hi, lo] of groups) {
  out += `<path class="err" d="M${x(a) + .5} ${y(hi)}V${y(lo)}M${x(a) - 7} ${y(hi)}h15M${x(a) - 7} ${y(lo)}h15"/>`;
  for (const h of new Set(hs)) {
    const k = hs.filter(v => v === h).length;
    for (let i = 0; i < k; i++) out += `<circle cx="${x(a) + .5 + (i - (k - 1) / 2) * 3}" cy="${y(h)}" r="1.700"/>`;
  }
  out += `<text x="${x(a)}" y="206" text-anchor="middle">${a}</text>`;
}
out += '<text x="147" y="216" text-anchor="middle">age</text><text transform="translate(10 99) rotate(-90)" text-anchor="middle">height</text>';
$("plot").innerHTML = out;
```
